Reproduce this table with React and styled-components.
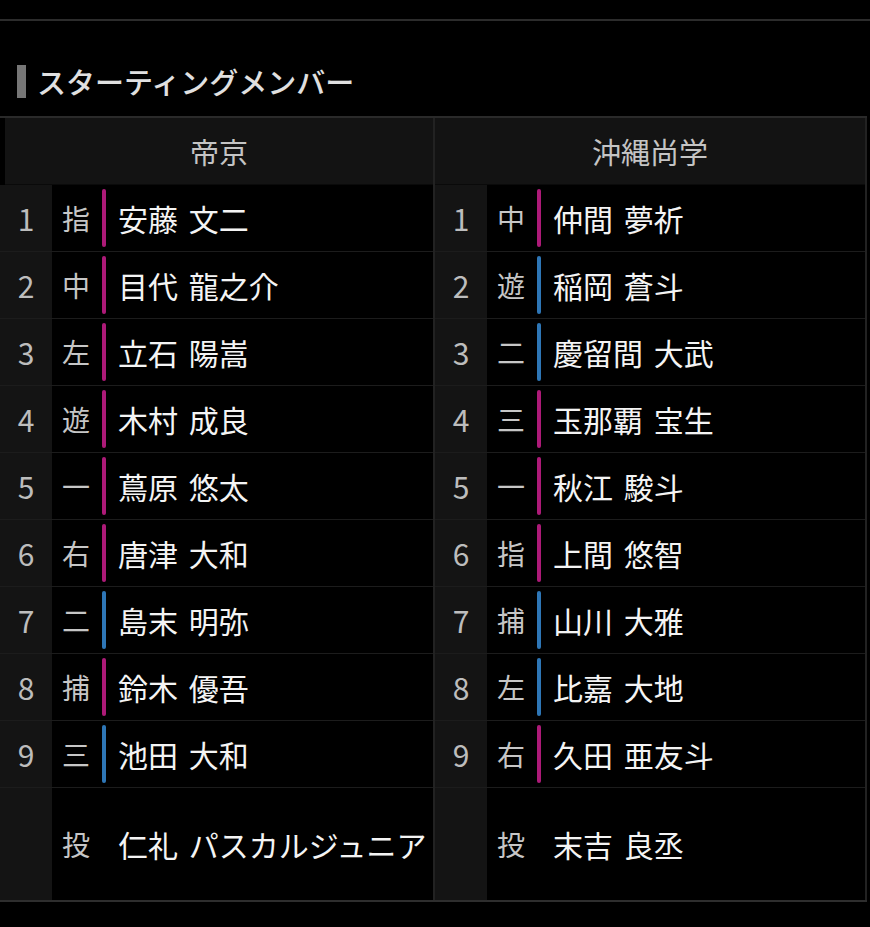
import React from 'react';
import styled, { createGlobalStyle } from 'styled-components';

const GlobalStyle = createGlobalStyle`
  body {
    margin: 0;
    background: #000;
    font-family: "Noto Sans CJK JP", "Noto Sans", sans-serif;
  }
`

const Page = styled.div`
  width: 870px;
  min-height: 927px;
  background: #000;
  padding-top: 19px;
`

const TopRule = styled.div`
  height: 2px;
  background: #2c2c2c;
`

const Title = styled.h2`
  display: flex;
  align-items: center;
  gap: 11px;
  margin: 44px 0 18px 17px;
  height: 33px;
  font-size: 29px;
  font-weight: 500;
  line-height: 1;
  color: #e0e0e0;

  &::before {
    content: '';
    width: 9px;
    height: 33px;
    background: #767676;
  }
`

const Table = styled.div`
  display: flex;
  border-top: 2px solid #2a2a2a;
  border-bottom: 2px solid #2e2e2e;
  width: 867px;
`

const Team = styled.div`
  width: ${p => p.$w}px;
  border-right: 2px solid #222;
`

const Header = styled.div`
  height: 66px;
  margin-left: ${p => p.$inset || 0}px;
  background: #131313;
  color: #c4c4c4;
  font-size: 29px;
  display: flex;
  align-items: center;
  justify-content: center;
  border-bottom: 1px solid #0a0a0a;
`

const Row = styled.div`
  display: flex;
  align-items: stretch;
  height: ${p => (p.$tall ? 112 : 66)}px;
  border-bottom: ${p => (p.$tall ? 'none' : '1px solid #1c1c1c')};
`

const Num = styled.div`
  width: 52px;
  flex-shrink: 0;
  background: #141414;
  color: #bdbdbd;
  font-size: 30px;
  display: flex;
  align-items: center;
  justify-content: center;
`

const Pos = styled.div`
  width: 30px;
  margin-left: 10px;
  color: #c6c6c6;
  font-size: 28px;
  display: flex;
  align-items: center;
`

const Bar = styled.span`
  align-self: center;
  width: 4px;
  height: 58px;
  margin-left: 10px;
  border-radius: 2px;
  background: ${p => (p.$kind === 'r' ? '#ad1a78' : p.$kind === 'l' ? '#2e76b6' : 'transparent')};
`

const Name = styled.div`
  margin-left: 12px;
  color: #f4f4f4;
  font-size: 30px;
  word-spacing: 4px;
  white-space: nowrap;
  display: flex;
  align-items: center;
`

const teito = [
  ['指', '安藤 文二', 'r'],
  ['中', '目代 龍之介', 'r'],
  ['左', '立石 陽嵩', 'r'],
  ['遊', '木村 成良', 'r'],
  ['一', '蔦原 悠太', 'r'],
  ['右', '唐津 大和', 'r'],
  ['二', '島末 明弥', 'l'],
  ['捕', '鈴木 優吾', 'r'],
  ['三', '池田 大和', 'l'],
]

const okinawa = [
  ['中', '仲間 夢祈', 'r'],
  ['遊', '稲岡 蒼斗', 'l'],
  ['二', '慶留間 大武', 'l'],
  ['三', '玉那覇 宝生', 'r'],
  ['一', '秋江 駿斗', 'r'],
  ['指', '上間 悠智', 'r'],
  ['捕', '山川 大雅', 'l'],
  ['左', '比嘉 大地', 'l'],
  ['右', '久田 亜友斗', 'r'],
]

const TeamTable = ({ name, lineup, pitcher, width, inset }) => (
  <Team $w={width}>
    <Header $inset={inset}>{name}</Header>
    {lineup.map(([pos, player, hand], i) => (
      <Row key={player}>
        <Num>{i + 1}</Num>
        <Pos>{pos}</Pos>
        <Bar $kind={hand} />
        <Name>{player}</Name>
      </Row>
    ))}
    <Row $tall>
      <Num />
      <Pos>投</Pos>
      <Bar />
      <Name>{pitcher}</Name>
    </Row>
  </Team>
)

const App = () => {
  return (
    <Page>
      <GlobalStyle />
      <TopRule />
      <Title>スターティングメンバー</Title>
      <Table>
        <TeamTable name="帝京" lineup={teito} pitcher="仁礼 パスカルジュニア" width={435} inset={5} />
        <TeamTable name="沖縄尚学" lineup={okinawa} pitcher="末吉 良丞" width={432} />
      </Table>
    </Page>
  )
}

export default App;
